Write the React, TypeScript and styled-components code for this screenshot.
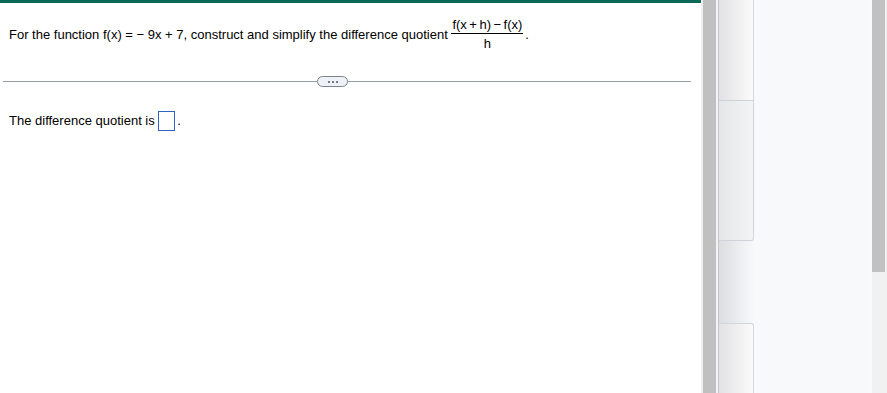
import React from "react";
import styled, { createGlobalStyle } from "styled-components";

const GlobalStyle = createGlobalStyle`
  html, body {
    margin: 0;
    padding: 0;
    background: #ffffff;
  }
  body {
    font-family: "Liberation Sans", Arial, sans-serif;
    color: #000;
  }
`;

const Page = styled.div`
  display: flex;
  width: 887px;
  height: 393px;
  overflow: hidden;
`;

const Main = styled.main`
  width: 701px;
  flex: none;
  display: flex;
  flex-direction: column;
  background: #fff;
  border-top: 3px solid #0c6857;
`;

const Question = styled.div`
  padding: 14px 9px 0;
  font-size: 13px;
  line-height: 15px;
  white-space: nowrap;
`;

const Fraction = styled.span`
  display: inline-flex;
  flex-direction: column;
  align-items: center;
  vertical-align: 10px;
  margin: 0 2px 0 0;
`;

const Numerator = styled.span`
  line-height: 15px;
  padding: 0 1px;
`;

const Bar = styled.span`
  align-self: stretch;
  height: 1px;
  background: #000;
  margin: 1px 0 2px;
`;

const Denominator = styled.span`
  line-height: 15px;
`;

const Op = styled.span`
  margin: 0 2.5px;
`;

const Divider = styled.div`
  display: flex;
  align-items: center;
  margin-top: 25px;
  padding: 0 10px 0 3px;
  height: 11px;
`;

const Rule = styled.div<{ $w?: number }>`
  height: 1px;
  background: #989ca6;
  ${(p) => (p.$w ? `width: ${p.$w}px; flex: none;` : `flex: 1;`)}
`;

const MoreButton = styled.button`
  flex: none;
  width: 31px;
  height: 11px;
  padding: 0;
  border: 1px solid #7b8391;
  border-radius: 6px;
  background: #eef1f5;
  display: flex;
  align-items: center;
  justify-content: center;
  gap: 2px;
  box-sizing: border-box;
`;

const Dot = styled.span`
  width: 2px;
  height: 2px;
  background: #4d5562;
  border-radius: 1px;
`;

const Answer = styled.div`
  padding: 0 9px;
  margin-top: 24px;
  font-size: 13px;
  line-height: 20px;
  white-space: nowrap;
`;

const AnswerBox = styled.span`
  display: inline-block;
  width: 17px;
  height: 20px;
  box-sizing: border-box;
  border: 1px solid #2f63c6;
  vertical-align: -6px;
  margin: 0 2px 0 0;
`;

const Side = styled.aside`
  flex: 1;
  display: flex;
  background: #f8f9fb;
`;

const Gutter = styled.div`
  width: 2px;
  flex: none;
  background: #efefef;
`;

const Grip = styled.div`
  width: 13px;
  flex: none;
  background: #c0c0c0;
`;

const GripEdge = styled.div`
  width: 2px;
  flex: none;
  background: #f4f4f4;
`;

const Tabs = styled.div`
  width: 35px;
  flex: none;
  display: flex;
  flex-direction: column;
  border-left: 1px solid #c4c5c9;
`;

const Tab = styled.div<{ $h?: number; $kind: "first" | "mid" | "gap" | "last" }>`
  ${(p) => (p.$h ? `height: ${p.$h}px; flex: none;` : `flex: 1;`)}
  box-sizing: border-box;
  background: ${(p) =>
    p.$kind === "mid"
      ? "linear-gradient(to right, #e5e6e8, #f3f4f6)"
      : p.$kind === "gap"
      ? "linear-gradient(to right, #dcdde0, #f8f9fb)"
      : "linear-gradient(to right, #e2e2e4, #fbfbfb)"};
  border-right: ${(p) => (p.$kind === "gap" ? "none" : "1px solid #d3d5da")};
  ${(p) => p.$kind === "first" && `border-bottom: 1px solid #cfd2d9;`}
  ${(p) =>
    p.$kind === "mid" &&
    `border-bottom: 1px solid #cfd2d9; border-bottom-right-radius: 3px;`}
  ${(p) =>
    p.$kind === "last" &&
    `border-top: 1px solid #d3d5da; border-top-right-radius: 3px;`}
`;

const Content = styled.div`
  flex: 1;
  background: #f8f9fb;
`;

const Scrollbar = styled.div`
  width: 16px;
  flex: none;
  display: flex;
  background: #f1f1f1;
  border-left: 1px solid #fbfbfb;
  box-sizing: border-box;
  padding-right: 2px;
`;

const Thumb = styled.div`
  flex: 1;
  height: 272px;
  background: #c1c1c1;
`;

export default function App() {
  return (
    <>
      <GlobalStyle />
      <Page>
        <Main>
          <Question>
            For the function f(x) = − 9x + 7, construct and simplify the
            difference quotient{" "}
            <Fraction>
              <Numerator>
                f(x<Op>+</Op>h)<Op>−</Op>f(x)
              </Numerator>
              <Bar />
              <Denominator>h</Denominator>
            </Fraction>
            .
          </Question>
          <Divider>
            <Rule $w={314} />
            <MoreButton aria-label="more">
              <Dot />
              <Dot />
              <Dot />
            </MoreButton>
            <Rule />
          </Divider>
          <Answer>
            The difference quotient is <AnswerBox />.
          </Answer>
        </Main>
        <Side>
          <Gutter />
          <Grip />
          <GripEdge />
          <Tabs>
            <Tab $kind="first" $h={101} />
            <Tab $kind="mid" $h={140} />
            <Tab $kind="gap" $h={82} />
            <Tab $kind="last" />
          </Tabs>
          <Content />
          <Scrollbar>
            <Thumb />
          </Scrollbar>
        </Side>
      </Page>
    </>
  );
}
